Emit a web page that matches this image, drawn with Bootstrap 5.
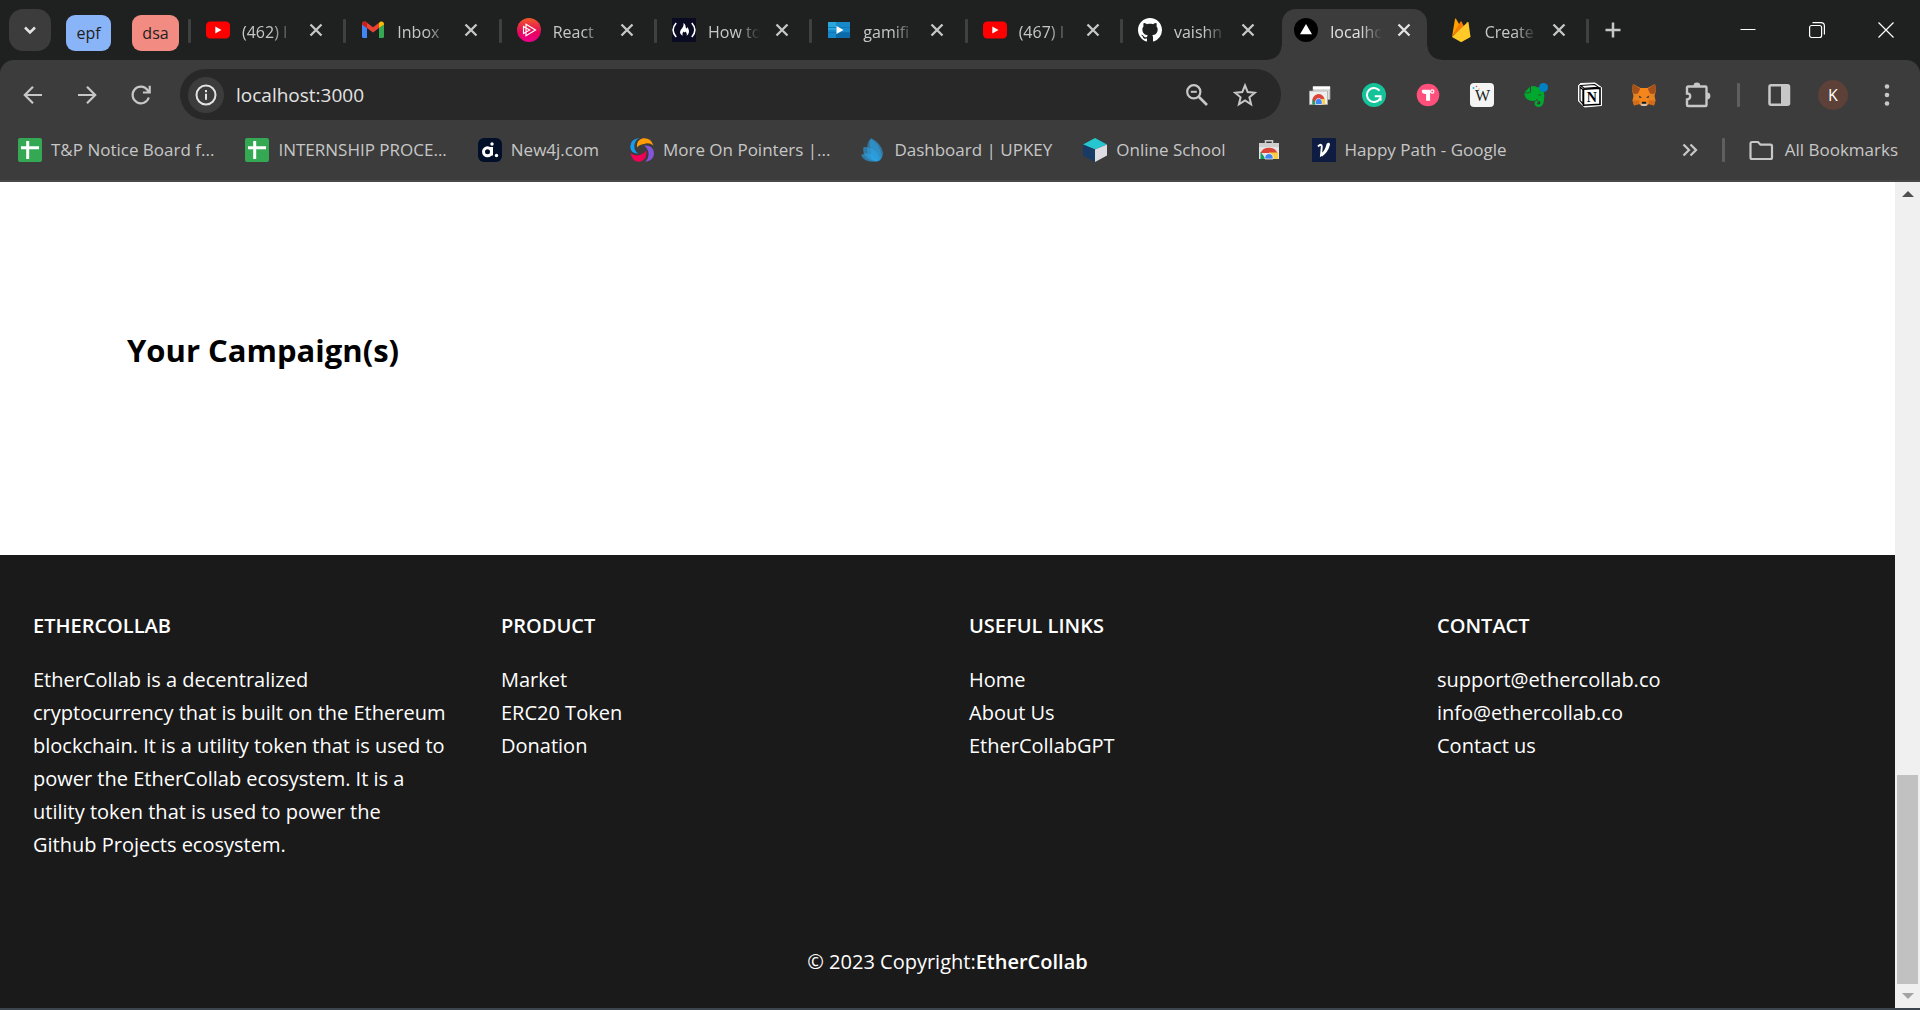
<!DOCTYPE html>
<html lang="en">
<head>
<meta charset="utf-8">
<meta name="viewport" content="width=device-width, initial-scale=1">
<title>EtherCollab</title>
<link href="https://cdn.jsdelivr.net/npm/bootstrap@5.3.0/dist/css/bootstrap.min.css" rel="stylesheet">
<style>
  :root { --strip: #1f2120; --bar: #3c3c3c; --ink: #c7c7c7; }
  body { font-family: "Open Sans", "Noto Sans", sans-serif; background: #fff; font-size: 16px; line-height: 24px; }
  svg { display: block; flex: none; overflow: visible; }
  button { padding: 0; border: 0; background: transparent; color: inherit; display: flex; align-items: center; justify-content: center; flex: none; }
  a { color: inherit; text-decoration: none; }

  /* tab strip */
  .tab-strip { height: 60px; background: var(--strip); color: var(--ink); padding: 9px 0 0 9px; }
  .tab-search { width: 42px; height: 42px; border-radius: 14px; background: var(--bar); }
  .tab-group { height: 36px; border-radius: 9px; color: #1f2120; padding: 0 9px; margin-top: 6px; }
  .group-blue { background: #8ab4f8; margin-left: 15px; width: 45px; }
  .group-red { background: #f28b82; margin-left: 21px; width: 47px; }
  .tab-list { flex: 0 1 1398px; margin-left: 9px; min-width: 0; }
  .tab-item { flex: 1 1 0; min-width: 0; height: 51px; padding-left: 15px; position: relative; }
  .tab-item::before { content: ""; width: 3px; height: 24px; background: #3f4140; border-radius: 1px; position: absolute; left: 0; top: 10px; }
  .tab-item svg.fav { margin-right: 12px; }
  .tab-body { height: 42px; padding-left: 3px; }
  .tab-name { width: 54px; overflow: hidden; white-space: nowrap; -webkit-mask-image: linear-gradient(90deg, #000 30px, transparent 52px); mask-image: linear-gradient(90deg, #000 30px, transparent 52px); padding-top: 3px; }
  .tab-close { width: 24px; height: 24px; margin-left: 8px; }
  .tab-item.current { color: #e3e3e3; }
  .tab-item.current::before, .tab-item.current + .tab-item::before { display: none; }
  .tab-item.current .tab-body { background: var(--bar); height: 51px; border-radius: 14px 14px 0 0; padding: 0 0 9px 12px; margin: 0 4px 0 -8px; position: relative; }
  .tab-item.current .tab-body::before, .tab-item.current .tab-body::after { content: ""; position: absolute; bottom: 0; width: 14px; height: 14px; }
  .tab-item.current .tab-body::before { left: -14px; background: radial-gradient(circle at 0 0, transparent 13px, var(--bar) 14px); }
  .tab-item.current .tab-body::after { right: -14px; background: radial-gradient(circle at 100% 0, transparent 13px, var(--bar) 14px); }
  .tab-end { width: 3px; height: 24px; background: #3f4140; margin-top: 10px; }
  .new-tab { width: 48px; height: 42px; }
  .win-btn { width: 69px; height: 42px; color: #fff; }

  /* toolbar */
  .tool-wrap { background: var(--strip); }
  .tools { background: var(--bar); border-radius: 14px 14px 0 0; border-bottom: 2px solid #474747; color: var(--ink); }
  .tool-row { height: 69px; padding: 0 6px; }
  .tool-btn { width: 54px; height: 42px; }
  .omni { background: #282828; height: 51px; border-radius: 26px; padding: 0 12px 0 8px; margin-left: 12px; }
  .site-info { width: 36px; height: 36px; border-radius: 50%; background: var(--bar); color: #e3e3e3; }
  .omni input { background: transparent; border: 0; outline: 0; color: #e3e3e3; font-size: 19px; margin-left: 12px; min-width: 0; padding: 0; }
  .omni .tool-btn { width: 48px; }
  .ext-row { padding-left: 12px; }
  .tool-sep { width: 3px; height: 24px; background: #5f5f5f; border-radius: 1px; }
  .ext-row .tool-sep { margin: 0 12px; }
  .avatar { width: 30px; height: 30px; border-radius: 50%; background: #5d4037; color: #fff; font-size: 16px; margin: 0 12px; }

  /* bookmarks */
  .marks { height: 51px; padding: 0 22px 9px 18px; font-size: 17px; }
  .mark-list { gap: 31px; min-width: 0; }
  .marks .tool-sep { margin: 0 24px 0 20px; }
  .mark-link { display: flex; align-items: center; gap: 9px; white-space: nowrap; }
  .mark-link.all { gap: 12px; }

  /* page */
  .page-view { background: #fff; color: #000; min-width: 0; }
  .campaigns { padding: 148px 127px 0; }
  .campaigns h1 { font-size: 31px; line-height: 40px; font-weight: 700; margin: 0; }
  .site-footer { background: #1a1a1a; color: #fff; font-size: 20px; line-height: 33px; padding: 54px 33px 30px; }
  .site-footer .row { --bs-gutter-x: 43px; }
  .site-footer h2 { font-size: 20px; line-height: 33px; font-weight: 600; margin: 0 0 21px; }
  .copy-line { margin-top: 84px; }
  .scroll-rail { width: 25px; background: #f0f0f0; flex: none; }
  .scroll-rail button { height: 24px; width: 25px; }
  .scroll-thumb { height: 209px; margin: 0 2px; background: #c1c1c1; }
  .task-edge { height: 2px; background: #3c444d; }
</style>
<script src="https://cdn.jsdelivr.net/npm/bootstrap@5.3.0/dist/js/bootstrap.bundle.min.js"></script>
</head>
<body class="d-flex flex-column min-vh-100">

<svg width="0" height="0" class="position-absolute" aria-hidden="true">
  <symbol id="x" viewBox="0 0 24 24"><path d="M6.5 6.5l11 11M17.5 6.500l-11 11" stroke="currentColor" stroke-width="2.300" fill="none"/></symbol>
  <symbol id="yt" viewBox="0 0 24 24"><rect y="3.600" width="24" height="17" rx="4.200" fill="#f00"/><path d="M9.300 8.400l6.200 3.600-6.200 3.600z" fill="#fff"/></symbol>
  <symbol id="sheet" viewBox="0 0 24 24"><rect width="24" height="24" rx="2" fill="#34a853"/><path d="M3 9.800h18M9.700 3v18" stroke="#fff" stroke-width="3"/></symbol>
</svg>

<header>
  <div class="tab-strip d-flex">
    <button class="tab-search" aria-label="Search tabs"><svg width="18" height="18" viewBox="0 0 18 18"><path d="M4 6.500l5 5 5-5" fill="none" stroke="#e3e3e3" stroke-width="2.500"/></svg></button>
    <button class="tab-group group-blue">epf</button>
    <button class="tab-group group-red">dsa</button>
    <nav class="tab-list d-flex" aria-label="Tabs">
      <div class="tab-item"><div class="tab-body d-flex align-items-center"><svg class="fav" width="24" height="24"><use href="#yt"/></svg><a href="#" class="tab-name">(462) I</a><button class="tab-close" aria-label="Close tab"><svg width="24" height="24"><use href="#x"/></svg></button></div></div>
      <div class="tab-item"><div class="tab-body d-flex align-items-center"><svg class="fav" width="24" height="24" viewBox="0 0 24 24"><path d="M1 6v12.500a1.500 1.500 0 0 0 1.500 1.500H6V10z" fill="#4285f4"/><path d="M23 6v12.500a1.500 1.500 0 0 1-1.500 1.500H18V10z" fill="#34a853"/><path d="M18 10l5-3.500V6c0-2.200-2.500-3-4-2l-1 .8z" fill="#fbbc04"/><path d="M1 6.500V6c0-2.200 2.500-3 4-2l7 5.200 6-4.400V10l-6 4.500L6 10z" fill="#ea4335"/><path d="M1 6.500L6 10V4.800L5 4C3.500 3 1 3.800 1 6z" fill="#c5221f"/></svg><a href="#" class="tab-name">Inbox</a><button class="tab-close" aria-label="Close tab"><svg width="24" height="24"><use href="#x"/></svg></button></div></div>
      <div class="tab-item"><div class="tab-body d-flex align-items-center"><svg class="fav" width="24" height="24" viewBox="0 0 24 24"><defs><linearGradient id="ps" x2="0" y2="1"><stop stop-color="#f05a28"/><stop offset=".6" stop-color="#e6055c"/><stop offset="1" stop-color="#ec008c"/></linearGradient></defs><circle cx="12" cy="12" r="12" fill="url(#ps)"/><path d="M9 6.300l9.500 5.700L9 17.700zM6.500 8.500l6.200 3.500-6.200 3.500z" fill="none" stroke="#fff" stroke-width="1.200"/></svg><a href="#" class="tab-name">React</a><button class="tab-close" aria-label="Close tab"><svg width="24" height="24"><use href="#x"/></svg></button></div></div>
      <div class="tab-item"><div class="tab-body d-flex align-items-center"><svg class="fav" width="24" height="24" viewBox="0 0 24 24"><rect width="24" height="24" fill="#0a0a23"/><path d="M4.200 5Q-2 12 4.200 19M19.800 5q6.200 7 0 14" fill="none" stroke="#fff" stroke-width="1.600"/><path d="M11.500 5c3 2 1.500 4.500 3 5.500 1-.3.600-1.500.3-2 3 3 3 7.500-.3 9.300 1-2-.3-3.500-1.200-4.400-.2 1.300-1.300 1-1.500 0-1.500 1.500-1.800 3-.8 4.400-4-1.500-3.300-5 -1.300-7 1.300-1.500 2.100-3.200 1.800-5.800z" fill="#fff"/></svg><a href="#" class="tab-name">How to</a><button class="tab-close" aria-label="Close tab"><svg width="24" height="24"><use href="#x"/></svg></button></div></div>
      <div class="tab-item"><div class="tab-body d-flex align-items-center"><svg class="fav" width="24" height="24" viewBox="0 0 24 24"><path d="M1 4h22v16H1z" fill="#1788c9"/><path d="M1 4h8v8H1z" fill="#29a6dc"/><path d="M9 14h14v6H9z" fill="#0d6aa8"/><path d="M1 9.500h22M1 14.500h22" stroke="#0f75b5" stroke-width=".8"/><path d="M9.500 8l7 4-7 4z" fill="#fff"/></svg><a href="#" class="tab-name">gamifi</a><button class="tab-close" aria-label="Close tab"><svg width="24" height="24"><use href="#x"/></svg></button></div></div>
      <div class="tab-item"><div class="tab-body d-flex align-items-center"><svg class="fav" width="24" height="24"><use href="#yt"/></svg><a href="#" class="tab-name">(467) I</a><button class="tab-close" aria-label="Close tab"><svg width="24" height="24"><use href="#x"/></svg></button></div></div>
      <div class="tab-item"><div class="tab-body d-flex align-items-center"><svg class="fav" width="24" height="24" viewBox="0 0 16 16"><path fill="#fff" d="M8 0C3.580 0 0 3.580 0 8c0 3.540 2.290 6.530 5.470 7.590.4.070.55-.17.55-.38 0-.19-.01-.82-.01-1.490-2.010.37-2.530-.49-2.690-.94-.09-.23-.48-.94-.82-1.130-.28-.15-.68-.52-.01-.53.63-.01 1.080.58 1.230.82.72 1.210 1.870.87 2.330.66.07-.52.28-.87.51-1.070-1.780-.2-3.640-.89-3.640-3.950 0-.87.31-1.590.82-2.150-.08-.2-.36-1.020.08-2.120 0 0 .67-.21 2.200.82.64-.18 1.320-.27 2-.27s1.360.09 2 .27c1.530-1.040 2.200-.82 2.200-.82.44 1.100.16 1.920.08 2.120.51.56.82 1.270.82 2.150 0 3.070-1.870 3.750-3.650 3.950.29.25.54.73.54 1.480 0 1.070-.01 1.930-.01 2.200 0 .21.15.46.55.38A8.010 8.010 0 0 0 16 8c0-4.420-3.580-8-8-8z"/></svg><a href="#" class="tab-name">vaishn</a><button class="tab-close" aria-label="Close tab"><svg width="24" height="24"><use href="#x"/></svg></button></div></div>
      <div class="tab-item current"><div class="tab-body d-flex align-items-center"><svg class="fav" width="24" height="24" viewBox="0 0 24 24"><circle cx="12" cy="12" r="12" fill="#000"/><path d="M12 6l6 10.300H6z" fill="#fff"/></svg><a href="#" class="tab-name" aria-current="page">localho</a><button class="tab-close" aria-label="Close tab"><svg width="24" height="24"><use href="#x"/></svg></button></div></div>
      <div class="tab-item"><div class="tab-body d-flex align-items-center"><svg class="fav" width="24" height="24" viewBox="0 0 24 24"><path d="M3 19L6 .8q.4-.8 1 0l3.500 6z" fill="#ffa000"/><path d="M3 19L11.500 3.600q.5-.7 1 0L15 8.500z" fill="#f57c00"/><path d="M3 19L18.500 4.200q.7-.5 1 .3L21.500 19 13 23.700q-.8.400-1.600 0z" fill="#ffca28"/></svg><a href="#" class="tab-name">Create</a><button class="tab-close" aria-label="Close tab"><svg width="24" height="24"><use href="#x"/></svg></button></div></div>
    </nav>
    <div class="tab-end"></div>
    <button class="new-tab" aria-label="New tab"><svg width="18" height="18" viewBox="0 0 18 18"><path d="M9 1.500v15M1.500 9h15" stroke="currentColor" stroke-width="2.500"/></svg></button>
    <div class="d-flex ms-auto">
      <button class="win-btn" aria-label="Minimize"><svg width="16" height="16" viewBox="0 0 16 16"><path d="M.5 7.500h15" stroke="#fff"/></svg></button>
      <button class="win-btn" aria-label="Restore"><svg width="16" height="16" viewBox="0 0 16 16" fill="none" stroke="#fff" stroke-width="1.200"><rect x=".6" y="3.500" width="12" height="12" rx="2"/><path d="M3.500.7H12a3.400 3.400 0 0 1 3.400 3.400V12.500"/></svg></button>
      <button class="win-btn" aria-label="Close"><svg width="16" height="16" viewBox="0 0 16 16"><path d="M.5.5l15 15M15.500.5l-15 15" stroke="#fff" stroke-width="1.200"/></svg></button>
    </div>
  </div>

  <div class="tool-wrap"><div class="tools">
    <div class="tool-row d-flex align-items-center">
      <button class="tool-btn" aria-label="Back"><svg width="24" height="24" viewBox="0 0 24 24"><path d="M21 12H4.500M12 3.800L3.800 12l8.200 8.200" fill="none" stroke="currentColor" stroke-width="2.200"/></svg></button>
      <button class="tool-btn" aria-label="Forward"><svg width="24" height="24" viewBox="0 0 24 24"><path d="M3 12h16.500M12 3.800l8.200 8.200-8.200 8.200" fill="none" stroke="currentColor" stroke-width="2.200"/></svg></button>
      <button class="tool-btn" aria-label="Reload"><svg width="24" height="24" viewBox="0 0 24 24"><path d="M19.800 14.500A8.300 8.300 0 1 1 18.500 7l1.500 1.800M20.700 2.700v6.800h-6.800" fill="none" stroke="currentColor" stroke-width="2.200"/></svg></button>
      <div class="omni d-flex align-items-center flex-grow-1">
        <button class="site-info" aria-label="Site information"><svg width="22" height="22" viewBox="0 0 22 22"><circle cx="11" cy="11" r="9.500" fill="none" stroke="currentColor" stroke-width="2"/><path d="M11 9.800v6M11 6v2.200" stroke="currentColor" stroke-width="2"/></svg></button>
        <input class="flex-grow-1" type="text" aria-label="Address" value="localhost:3000">
        <button class="tool-btn" aria-label="Zoom"><svg width="24" height="24" viewBox="0 0 24 24" fill="none" stroke="currentColor"><circle cx="8.800" cy="8.800" r="6.600" stroke-width="2.200"/><path d="M5.800 8.800h6" stroke-width="2"/><path d="M13.500 13.500l8.500 8.500" stroke-width="2.600"/></svg></button>
        <button class="tool-btn" aria-label="Bookmark this page"><svg width="24" height="24" viewBox="0 0 24 24"><path d="M12 2.500l2.700 6.600 7.100.6-5.400 4.600 1.700 7L12 17.500l-6.100 3.800 1.700-7-5.400-4.600 7.100-.6z" fill="none" stroke="currentColor" stroke-width="2"/></svg></button>
      </div>
      <div class="ext-row d-flex align-items-center">
        <button class="tool-btn" aria-label="Web store"><svg width="24" height="24" viewBox="0 0 24 24"><path d="M5 3.500h17v13H5z" fill="#dedede" stroke="#999" stroke-width=".8"/><path d="M5 3.500h17V6H5z" fill="#fff"/><path d="M1.500 8h18v13.500h-18z" fill="#eee" stroke="#aaa" stroke-width=".8"/><path d="M4.500 21.500v-3a6 6 0 0 1 12-2.500h-6z" fill="#db4437"/><path d="M4.500 21.500V16l4 5.500z" fill="#0f9d58"/><path d="M10.500 16h6.500v5.500h-6.500z" fill="#ffcd40"/><path d="M7.500 21.500a3.500 4.500 0 1 1 6.500 0z" fill="#4285f4" stroke="#fff" stroke-width=".6"/></svg></button>
        <button class="tool-btn" aria-label="Grammarly"><svg width="24" height="24" viewBox="0 0 24 24"><circle cx="12" cy="12" r="12" fill="#15c39a"/><path d="M17.500 7.700A7 7 0 1 0 18 15.500M12.800 13.200h5.700v4.500" fill="none" stroke="#fff" stroke-width="2"/></svg></button>
        <button class="tool-btn" aria-label="Text tool"><svg width="24" height="24" viewBox="0 0 24 24"><circle cx="12" cy="12" r="11.300" fill="#ff4f7b"/><path d="M6.500 6.800h7l1.300 2.700h-.7v8.200h-4V11c-2.500.2-4.500-.8-4.300-3z" fill="#fff"/><circle cx="16.300" cy="8.500" r="1.600" fill="none" stroke="#fff" stroke-width="1.200"/></svg></button>
        <button class="tool-btn" aria-label="Wikipedia"><svg width="24" height="24" viewBox="0 0 24 24"><rect width="24" height="24" rx="4" fill="#f4f4f4"/><text x="12.500" y="18" text-anchor="middle" font-family="Liberation Serif, serif" font-size="16" fill="#222">W</text><circle cx="3.500" cy="5" r="1" fill="#2ab0d8"/><circle cx="6.500" cy="3.500" r=".8" fill="#e84a4a"/><circle cx="9" cy="6" r=".7" fill="#f0a030"/></svg></button>
        <button class="tool-btn" aria-label="Evernote"><svg width="24" height="24" viewBox="0 0 24 24"><path d="M.3 9.500L6 3.800V8q0 1.500-1.500 1.500zM7 3.300q3.500-1 6 1 5.500-.5 6.500 2.200 1.500 6 .2 12.500-.8 4.700-5 5-4.200-.2-4.200-3.700 0-3 3.800-3v2q-1.500 0-1.300 1 .2 1.300 1.700 1.200 2-.2 1.700-3 -2.300-.2-3.400-2.500-.8 2-3.500 2Q1.300 18.300.3 11q0-.8.700-.8h4Q7 10 7 8z" fill="#00a82d"/><path d="M14.500 11.500q2-.8 2.800 1-1.400-.4-2.800 0z" fill="#3c3c3c"/><circle cx="19.500" cy="4.500" r="4.500" fill="#0081c2"/></svg></button>
        <button class="tool-btn" aria-label="Notion"><svg width="24" height="24" viewBox="0 0 24 24"><path d="M2.500.5L17 0l6.500 4.500v18L6.500 24 .5 18V2.500z" fill="#fff" stroke="#fff" stroke-linejoin="round"/><path d="M2.500 2.500L16.500 1.500l4 2.800-14.500 1zM2 4l3 2.800v14L2 17.500z" fill="#fff" stroke="#000" stroke-width="1.100"/><path d="M5.500 6.200l16.500-1v16l-16.500 1z" fill="#fff" stroke="#000" stroke-width="1.600"/><text x="13.800" y="18.500" text-anchor="middle" font-family="Liberation Serif, serif" font-weight="700" font-size="14">N</text></svg></button>
        <button class="tool-btn" aria-label="MetaMask"><svg width="24" height="24" viewBox="0 0 24 24"><path d="M1 1l7.500 4h7L23 1l1 6-1.500 6 1 4.500-1.500 5-5-1.400-2.500 2h-5l-2.500-2L2 22.500.5 17.500l1-4.500L0 7z" fill="#e8821e"/><path d="M1 1l7.500 5L6 10.500 2 11 0 7zM23 1l-7.500 5 2.500 4.500 4 .5 2-4z" fill="#a3501a"/><path d="M8.500 5h7l2.500 6-3 8H9L6 11z" fill="#f6851b"/><path d="M.5 17.500h7l-.5 3.600-5 1.400zM23.500 17.500h-7l.5 3.600 5 1.400z" fill="#d46b18"/><path d="M7 12.500l3 2-2.500.5zM17 12.500l-3 2 2.500.5z" fill="#233447"/><path d="M8.500 20.500l1.500-1.500h4l1.500 1.500-1.500 2.500h-4z" fill="#d7c1b3"/><path d="M10 18.800h4l.5 2h-5z" fill="#161616"/></svg></button>
        <button class="tool-btn" aria-label="Extensions"><svg width="26" height="26" viewBox="0 0 26 26"><path d="M3 4.500h17.500a1 1 0 0 1 1 1V23a1 1 0 0 1-1 1H3a1 1 0 0 1-1-1v-5.500q3.200-.3 3.200-3.200T2 11.500v-6a1 1 0 0 1 1-1z" fill="none" stroke="currentColor" stroke-width="2.400"/><path d="M8.500 4a3.400 3.400 0 0 1 6.800 0zM22 10.600a3.400 3.400 0 0 1 0 6.800z" fill="currentColor"/></svg></button>
        <div class="tool-sep"></div>
        <button class="tool-btn" aria-label="Side panel"><svg width="24" height="24" viewBox="0 0 24 24"><rect x="2.500" y="2.300" width="19.500" height="19.500" rx="1.500" fill="none" stroke="currentColor" stroke-width="2.500"/><path d="M14 2.500h8v19h-8z" fill="currentColor"/></svg></button>
        <button class="avatar" aria-label="Profile">K</button>
        <button class="tool-btn" aria-label="Menu"><svg width="6" height="24" viewBox="0 0 6 24" fill="currentColor"><circle cx="3" cy="3.500" r="2.300"/><circle cx="3" cy="12" r="2.300"/><circle cx="3" cy="20.500" r="2.300"/></svg></button>
      </div>
    </div>

    <nav class="marks d-flex align-items-center" aria-label="Bookmarks">
      <div class="mark-list d-flex">
        <a class="mark-link" href="#"><svg width="24" height="24"><use href="#sheet"/></svg>T&amp;P Notice Board f...</a>
        <a class="mark-link" href="#"><svg width="24" height="24"><use href="#sheet"/></svg>INTERNSHIP PROCE...</a>
        <a class="mark-link" href="#"><svg width="24" height="24" viewBox="0 0 24 24"><rect width="24" height="24" rx="6" fill="#010f29"/><circle cx="9.500" cy="13.800" r="4" fill="none" stroke="#fff" stroke-width="3"/><path d="M13.500 9v8.500" stroke="#fff" stroke-width="3"/><circle cx="14" cy="6" r="1.700" fill="#fff"/><circle cx="18.500" cy="17.500" r="1.700" fill="#fff"/></svg>New4j.com</a>
        <a class="mark-link" href="#"><svg width="24" height="24" viewBox="0 0 24 24" fill="none"><path d="M9.500 0Q3 3 4.500 11q1 3 4 4.500Q1 16 .2 9 .3 1 9.500 0z" fill="#149ef2"/><path d="M7 9.500Q6 2 13 .2q8-.7 10.500 7.300Q19 4 14 6q-5 .5-7 3.500z" fill="#ff9c07"/><path d="M14 7.500q9-1 10 7.500.2 7.500-8.800 8.900 4-4 3.300-8.900-.8-5-4.500-7.500z" fill="#8454db"/><path d="M.3 15q4.200 3.500 9.700 2 4.500-1.500 6.300-4.500 1 8.500-5.800 11Q3 25 .3 15z" fill="#f50057"/></svg>More On Pointers |...</a>
        <a class="mark-link" href="#"><svg width="24" height="24" viewBox="0 0 24 24"><g fill="#2ba3e8"><path d="M10 0q10 5 12 14.500 0 9.500-8 9-5-1-4-12Q7 8 10 0z" opacity=".6"/><path d="M9 1Q5 6 6.500 14q2 8 9 9.500 5-1 5-6Q18 4 9 1z" opacity=".5"/><path d="M2.500 9Q1 15 6 20q5 4 12 3 2-3-2-8Q10 8 2.500 9z" opacity=".6"/><path d="M0 17q4-3 9-1t8 7Q4 26 0 17z" opacity=".6"/></g></svg>Dashboard | UPKEY</a>
        <a class="mark-link" href="#"><svg width="24" height="24" viewBox="0 0 24 24"><path d="M12 0l12 6.500-12 5L0 6.500z" fill="#26c6d0"/><path d="M0 6.500l12 5V24L0 17.500z" fill="#173a66"/><path d="M24 6.500l-12 5V24l12-6.500z" fill="#dcdce2"/></svg>Online School</a>
        <a class="mark-link" href="#" aria-label="Web store"><svg width="24" height="24" viewBox="0 0 24 24"><path d="M8.500 5V2.800h7V5" fill="none" stroke="#ccc" stroke-width="1.500"/><path d="M2 5h20v16H2z" fill="#e4e4e4"/><path d="M2 5h20v4H2z" fill="#cfcfcf"/><path d="M3.500 15a9 8 0 0 1 17 0z" fill="#db4437"/><path d="M3.500 14L9 21H3.500z" fill="#0f9d58"/><path d="M12 14.500h9V21h-9z" fill="#ffcd40"/><path d="M8 21a4.200 4.200 0 1 1 8 0z" fill="#4285f4" stroke="#fff" stroke-width=".7"/></svg></a>
        <a class="mark-link" href="#"><svg width="24" height="24" viewBox="0 0 24 24"><rect width="24" height="24" fill="#0f1c42"/><path d="M6 8.500q3.500-3.500 3.800 0l-.8 8.800q5-3.800 6.500-11 1.800-1.300 1.500.5-2 7.200-7.500 11" fill="none" stroke="#fff" stroke-width="1.900"/></svg>Happy Path - Google</a>
      </div>
      <div class="d-flex align-items-center ms-auto">
        <button aria-label="More bookmarks"><svg width="24" height="24" viewBox="0 0 24 24"><path d="M5.500 6.500l5.500 5.500-5.500 5.500M12.500 6.500l5.500 5.500-5.500 5.500" fill="none" stroke="currentColor" stroke-width="2.300"/></svg></button>
        <div class="tool-sep"></div>
        <a class="mark-link all" href="#"><svg width="24" height="24" viewBox="0 0 24 24"><path d="M1.500 19.500v-14a1.500 1.500 0 0 1 1.500-1.500h6l2.500 2.700H21.500A1.500 1.500 0 0 1 23 8.200v11.300a1.500 1.500 0 0 1-1.500 1.500H3a1.500 1.500 0 0 1-1.500-1.500z" fill="none" stroke="currentColor" stroke-width="2.200"/></svg>All Bookmarks</a>
      </div>
    </nav>
  </div></div>
</header>

<div class="d-flex flex-grow-1">
  <div class="page-view d-flex flex-column flex-grow-1">
    <main class="campaigns flex-grow-1"><h1>Your Campaign(s)</h1></main>
    <footer class="site-footer">
      <div class="row">
        <div class="col-3"><h2>ETHERCOLLAB</h2><p class="m-0">EtherCollab is a decentralized<br>cryptocurrency that is built on the Ethereum<br>blockchain. It is a utility token that is used to<br>power the EtherCollab ecosystem. It is a<br>utility token that is used to power the<br>Github Projects ecosystem.</p></div>
        <div class="col-3"><h2>PRODUCT</h2><ul class="list-unstyled m-0"><li><a href="#">Market</a></li><li><a href="#">ERC20 Token</a></li><li><a href="#">Donation</a></li></ul></div>
        <div class="col-3"><h2>USEFUL LINKS</h2><ul class="list-unstyled m-0"><li><a href="#">Home</a></li><li><a href="#">About Us</a></li><li><a href="#">EtherCollabGPT</a></li></ul></div>
        <div class="col-3"><h2>CONTACT</h2><ul class="list-unstyled m-0"><li><a href="#">support@ethercollab.co</a></li><li><a href="#">info@ethercollab.co</a></li><li><a href="#">Contact us</a></li></ul></div>
      </div>
      <div class="copy-line text-center">© 2023 Copyright:<a class="fw-semibold" href="#">EtherCollab</a></div>
    </footer>
  </div>
  <div class="scroll-rail d-flex flex-column">
    <button aria-label="Scroll up"><svg width="12" height="6" viewBox="0 0 12 6"><path d="M0 6l6-6 6 6z" fill="#505050"/></svg></button>
    <div class="flex-grow-1"></div>
    <div class="scroll-thumb"></div>
    <button aria-label="Scroll down"><svg width="12" height="6" viewBox="0 0 12 6"><path d="M0 0l6 6 6-6z" fill="#a3a3a3"/></svg></button>
  </div>
</div>
<div class="task-edge"></div>
</body>
</html>
